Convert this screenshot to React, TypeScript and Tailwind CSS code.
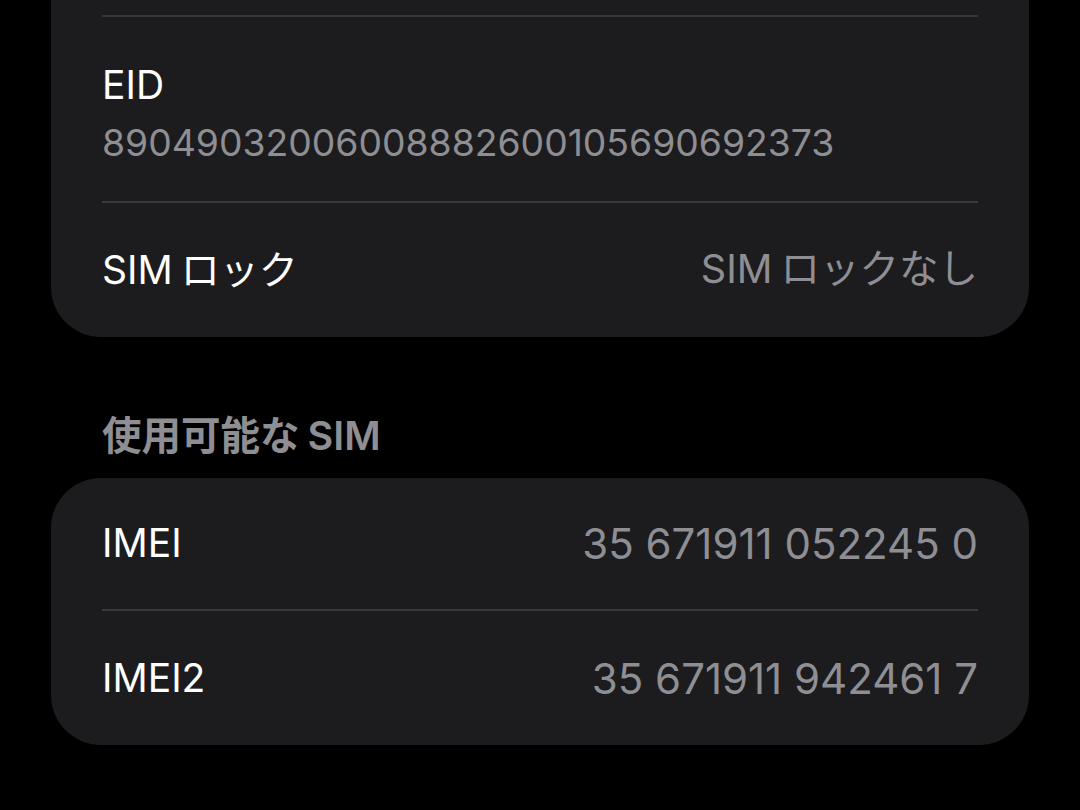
import React from "react"

const font = {
  fontFamily: '"Inter", "Noto Sans CJK JP", sans-serif',
}

function Divider() {
  return <div className="h-[2px] w-full bg-[#38383a]" />
}

// Latin and kana get a little gap between them, as iOS draws it
function Mixed({ latin, kana }: { latin: string; kana: string }) {
  return (
    <>
      {latin}
      <span className="ml-[8px]">{kana}</span>
    </>
  )
}

function Row({
  label,
  value,
  h = "h-[134px]",
  valueSize = "text-[42px]",
}: {
  label: React.ReactNode
  value: React.ReactNode
  h?: string
  valueSize?: string
}) {
  return (
    <div className={`flex items-center justify-between ${h}`}>
      <span className="text-[39px] text-white">{label}</span>
      <span className={`${valueSize} text-[#8e8e93]`}>{value}</span>
    </div>
  )
}

export default function App() {
  return (
    <div
      className="h-[810px] w-[1080px] overflow-hidden bg-black px-[51px]"
      style={font}
    >
      <section className="rounded-b-[50px] bg-[#1c1c1e] px-[51px]">
        <div className="h-[15px]" />
        <Divider />
        <div className="flex h-[184px] flex-col justify-center gap-[12px] pt-[10px]">
          <span className="text-[39px] leading-[46px] text-white">EID</span>
          <span className="text-[37.3px] leading-[46px] text-[#8e8e93]">
            89049032006008882600105690692373
          </span>
        </div>
        <Divider />
        <Row
          label={<Mixed latin="SIM" kana="ロック" />}
          value={<Mixed latin="SIM" kana="ロックなし" />}
          valueSize="text-[39.5px]"
        />
      </section>

      <h2 className="mt-[77px] px-[51px] text-[39.5px] font-semibold leading-[44px] text-[#8e8e93]">
        使用可能な<span className="ml-[8px]">SIM</span>
      </h2>

      <section className="mt-[20px] rounded-[50px] bg-[#1c1c1e] px-[51px]">
        <Row label="IMEI" value="35 671911 052245 0" h="h-[131px]" />
        <Divider />
        <Row label="IMEI2" value="35 671911 942461 7" />
      </section>
    </div>
  )
}
